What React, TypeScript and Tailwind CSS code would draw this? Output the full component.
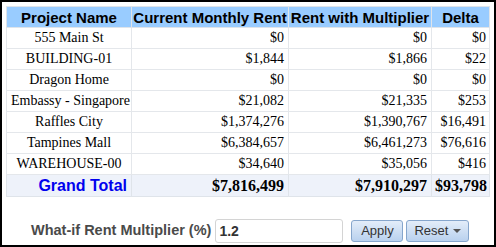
import React from 'react';

const rows = [
  ['555 Main St', '$0', '$0', '$0'],
  ['BUILDING-01', '$1,844', '$1,866', '$22'],
  ['Dragon Home', '$0', '$0', '$0'],
  ['Embassy - Singapore', '$21,082', '$21,335', '$253'],
  ['Raffles City', '$1,374,276', '$1,390,767', '$16,491'],
  ['Tampines Mall', '$6,384,657', '$6,461,273', '$76,616'],
  ['WAREHOUSE-00', '$34,640', '$35,056', '$416'],
];

export default function App() {
  return (
    <div className="w-[496px] h-[247px] border-2 border-black bg-white font-['Liberation_Sans',Arial,sans-serif]">
      <table className="ml-[4px] mt-[4px] border-collapse table-fixed w-[483px]">
        <colgroup>
          <col className="w-[125px]" />
          <col className="w-[157px]" />
          <col className="w-[143px]" />
          <col className="w-[58px]" />
        </colgroup>
        <thead>
          <tr className="bg-[#9cf] h-[21px] text-[15px] font-bold text-black leading-none">
            <th className="border border-[#dfe4ea] text-center px-0">Project Name</th>
            <th className="border border-[#dfe4ea] text-center px-0 whitespace-nowrap">Current Monthly Rent</th>
            <th className="border border-[#dfe4ea] text-center px-0 whitespace-nowrap">Rent with Multiplier</th>
            <th className="border border-[#dfe4ea] text-center px-0">Delta</th>
          </tr>
        </thead>
        <tbody className="font-['Liberation_Serif','Times_New_Roman',serif] text-[14px] text-black leading-none">
          {rows.map((r) => (
            <tr key={r[0]} className="h-[21px]">
              <td className="border border-[#e4e7eb] text-center px-1 whitespace-nowrap">{r[0]}</td>
              <td className="border border-[#e4e7eb] text-right px-[4px]">{r[1]}</td>
              <td className="border border-[#e4e7eb] text-right px-[4px]">{r[2]}</td>
              <td className="border border-[#e4e7eb] text-right px-[3px]">{r[3]}</td>
            </tr>
          ))}
          <tr className="h-[22px] bg-[#eef2fa] font-bold text-[16px]">
            <td className="border border-[#dfe4ea] text-right px-[4px] text-[#0000ee] font-['Liberation_Sans',Arial,sans-serif]">Grand Total</td>
            <td className="border border-[#dfe4ea] text-right px-[4px]">$7,816,499</td>
            <td className="border border-[#dfe4ea] text-right px-[4px]">$7,910,297</td>
            <td className="border border-[#dfe4ea] text-right px-[3px]">$93,798</td>
          </tr>
        </tbody>
      </table>

      <div className="flex items-center mt-[22px] ml-[29px]">
        <span className="text-[14.5px] font-bold text-[#4a4a4a]">What-if Rent Multiplier (%)</span>
        <input
          className="ml-[4px] w-[128px] h-[24px] border border-[#d4d4d4] rounded-[3px] px-[3px] text-[14px] font-bold text-[#333] outline-none"
          defaultValue="1.2"
        />
        <button className="ml-[8px] w-[52px] h-[22px] rounded-[3px] border border-[#86a6cc] bg-gradient-to-b from-[#e3edf9] to-[#b9d1ee] text-[13px] text-[#333]">
          Apply
        </button>
        <button className="ml-[3px] w-[63px] h-[22px] rounded-[3px] border border-[#86a6cc] bg-gradient-to-b from-[#e3edf9] to-[#b9d1ee] text-[13px] text-[#333] flex items-center justify-center gap-[5px]">
          Reset
          <span className="w-0 h-0 border-l-[4px] border-r-[4px] border-t-[4px] border-l-transparent border-r-transparent border-t-[#555]" />
        </button>
      </div>
    </div>
  );
}
